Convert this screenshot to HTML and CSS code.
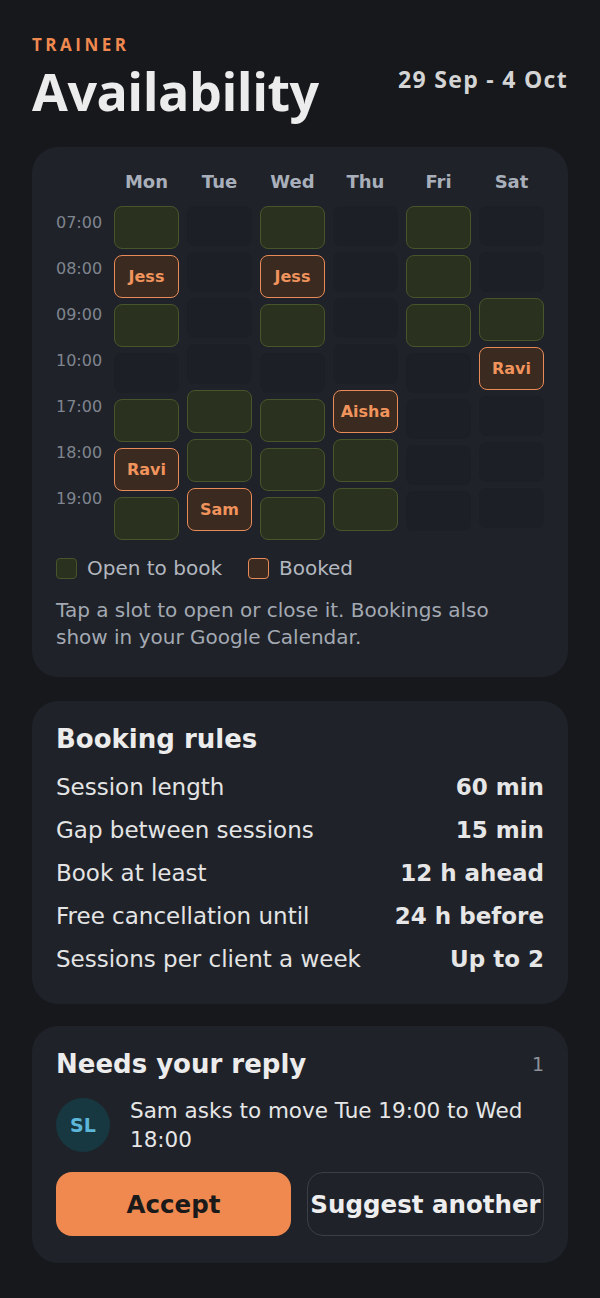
FILE: index.html
```html
<!DOCTYPE html>
<html lang="en">
<head>
<meta charset="utf-8">
<title>Availability</title>
<link rel="stylesheet" href="styles.css">
</head>
<body>
<div class="page">
  <header class="header">
    <div class="eyebrow">TRAINER</div>
    <div class="title-row">
      <h1 class="title">Availability</h1>
      <div class="date">29 Sep - 4 Oct</div>
    </div>
  </header>

  <section class="card card-sched">
    <div class="sched-head">
      <span></span>
      <span class="dayname">Mon</span>
      <span class="dayname">Tue</span>
      <span class="dayname">Wed</span>
      <span class="dayname">Thu</span>
      <span class="dayname">Fri</span>
      <span class="dayname">Sat</span>
    </div>
    <div class="sched-body">
      <div class="times">
        <div class="time">07:00</div>
        <div class="time">08:00</div>
        <div class="time">09:00</div>
        <div class="time">10:00</div>
        <div class="time">17:00</div>
        <div class="time">18:00</div>
        <div class="time">19:00</div>
      </div>
      <div class="day">
        <div class="slot open"></div>
        <div class="slot booked">Jess</div>
        <div class="slot open"></div>
        <div class="slot"></div>
        <div class="slot open"></div>
        <div class="slot booked">Ravi</div>
        <div class="slot open"></div>
      </div>
      <div class="day">
        <div class="slot"></div>
        <div class="slot"></div>
        <div class="slot"></div>
        <div class="slot"></div>
        <div class="slot open"></div>
        <div class="slot open"></div>
        <div class="slot booked">Sam</div>
      </div>
      <div class="day">
        <div class="slot open"></div>
        <div class="slot booked">Jess</div>
        <div class="slot open"></div>
        <div class="slot"></div>
        <div class="slot open"></div>
        <div class="slot open"></div>
        <div class="slot open"></div>
      </div>
      <div class="day">
        <div class="slot"></div>
        <div class="slot"></div>
        <div class="slot"></div>
        <div class="slot"></div>
        <div class="slot booked">Aisha</div>
        <div class="slot open"></div>
        <div class="slot open"></div>
      </div>
      <div class="day">
        <div class="slot open"></div>
        <div class="slot open"></div>
        <div class="slot open"></div>
        <div class="slot"></div>
        <div class="slot"></div>
        <div class="slot"></div>
        <div class="slot"></div>
      </div>
      <div class="day">
        <div class="slot"></div>
        <div class="slot"></div>
        <div class="slot open"></div>
        <div class="slot booked">Ravi</div>
        <div class="slot"></div>
        <div class="slot"></div>
        <div class="slot"></div>
      </div>
    </div>

    <div class="legend">
      <div class="legend-item"><span class="swatch swatch-open"></span>Open to book</div>
      <div class="legend-item"><span class="swatch swatch-booked"></span>Booked</div>
    </div>
    <p class="help">Tap a slot to open or close it. Bookings also show in your Google Calendar.</p>
  </section>

  <section class="card card-rules">
    <h2 class="card-title">Booking rules</h2>
    <div class="rule"><span>Session length</span><strong>60 min</strong></div>
    <div class="rule"><span>Gap between sessions</span><strong>15 min</strong></div>
    <div class="rule"><span>Book at least</span><strong>12 h ahead</strong></div>
    <div class="rule"><span>Free cancellation until</span><strong>24 h before</strong></div>
    <div class="rule"><span>Sessions per client a week</span><strong>Up to 2</strong></div>
  </section>

  <section class="card card-reply">
    <div class="card-head">
      <h2 class="card-title">Needs your reply</h2>
      <span class="count">1</span>
    </div>
    <div class="request">
      <div class="avatar">SL</div>
      <p class="request-text">Sam asks to move Tue 19:00 to Wed 18:00</p>
    </div>
    <div class="actions">
      <button class="btn btn-accept">Accept</button>
      <button class="btn btn-ghost">Suggest another</button>
    </div>
  </section>
</div>
</body>
</html>
```

FILE: styles.css
```css
* { box-sizing: border-box; }

html, body {
  margin: 0;
  background: #16181c;
}

body {
  font-family: "DejaVu Sans", Verdana, sans-serif;
  color: #e8e8e8;
}

.page {
  padding: 35px 32px 32px;
}

.header {
  margin-bottom: 27px;
}

.eyebrow {
  font-family: "Open Sans", "DejaVu Sans", sans-serif;
  font-weight: 700;
  font-size: 17px;
  line-height: 20px;
  letter-spacing: 3.5px;
  color: #f0894f;
}

.title-row {
  display: flex;
  justify-content: space-between;
  align-items: flex-start;
  margin-top: 7px;
}

.title {
  margin: 0;
  font-family: "Open Sans", "DejaVu Sans", sans-serif;
  font-weight: 700;
  font-size: 52px;
  line-height: 58px;
  letter-spacing: -0.5px;
  color: #ececec;
}

.date {
  margin-top: 2px;
  font-family: "Open Sans", "DejaVu Sans", sans-serif;
  font-weight: 700;
  font-size: 23px;
  line-height: 30px;
  letter-spacing: 1.3px;
  color: #d4d4d4;
}

.card {
  background: #1f2229;
  border-radius: 26px;
  padding: 24px;
  margin-bottom: 24px;
}

.card-sched {
  padding-bottom: 26px;
}

.card-rules {
  margin-bottom: 22px;
}

.card-reply {
  padding-bottom: 27px;
}

/* schedule */
.sched-head,
.sched-body {
  display: grid;
  grid-template-columns: 50px repeat(6, 1fr);
  column-gap: 8px;
}

.sched-head {
  margin-bottom: 14px;
}

.dayname {
  text-align: center;
  font-weight: 700;
  font-size: 18px;
  line-height: 21px;
  color: #a8afba;
}

.times,
.day {
  display: flex;
  flex-direction: column;
  gap: 6px;
}

.time {
  height: 40px;
  padding-top: 8px;
  font-size: 16px;
  line-height: 18px;
  color: #7f858f;
}

.slot {
  height: 40px;
  border-radius: 8px;
  background: #1c1f25;
}

.slot.open,
.slot.booked {
  height: 43px;
  border: 1.5px solid;
}

.slot.open {
  background: #2a321f;
  border-color: #47552a;
}

.slot.booked {
  background: #3a2a1f;
  border-color: #e98b58;
  color: #f0935c;
  font-weight: 700;
  font-size: 16px;
  display: flex;
  align-items: center;
  justify-content: center;
}

.legend {
  display: flex;
  gap: 26px;
  margin-top: 17px;
}

.legend-item {
  display: flex;
  align-items: center;
  gap: 10px;
  font-size: 20px;
  line-height: 22px;
  color: #b2b7bf;
}

.swatch {
  width: 21px;
  height: 21px;
  border-radius: 4px;
  border: 1.5px solid;
}

.swatch-open {
  background: #2a321f;
  border-color: #47552a;
}

.swatch-booked {
  background: #3a2a1f;
  border-color: #e98b58;
}

.help {
  margin: 18px 0 0;
  padding-right: 10px;
  font-size: 20px;
  line-height: 27px;
  color: #a3a9b2;
}

/* rules */
.card-title {
  margin: 0;
  font-size: 26px;
  line-height: 28px;
  font-weight: 700;
  color: #ececec;
}

.card > .card-title {
  margin-bottom: 12px;
}

.rule {
  display: flex;
  justify-content: space-between;
  align-items: center;
  height: 43px;
  font-size: 23px;
  color: #e4e4e4;
}

.rule strong {
  font-weight: 700;
  color: #e6e6e6;
}

/* reply */
.card-head {
  display: flex;
  justify-content: space-between;
  align-items: center;
}

.count {
  font-size: 19px;
  color: #8b9099;
}

.request {
  display: flex;
  align-items: center;
  gap: 20px;
  margin-top: 18px;
}

.avatar {
  flex: none;
  width: 54px;
  height: 54px;
  border-radius: 50%;
  background: #173840;
  color: #5bb6d8;
  font-weight: 700;
  font-size: 19px;
  display: flex;
  align-items: center;
  justify-content: center;
}

.request-text {
  margin: 0;
  font-size: 21.5px;
  line-height: 29px;
  color: #e6e6e6;
}

.actions {
  display: flex;
  gap: 16px;
  margin-top: 18px;
}

.btn {
  flex: 1 1 0;
  height: 64px;
  border-radius: 16px;
  font-family: "DejaVu Sans", Verdana, sans-serif;
  font-weight: 700;
  font-size: 24.5px;
  padding: 0;
  white-space: nowrap;
  cursor: pointer;
}

.btn-accept {
  background: #f0894f;
  border: none;
  color: #1a1a1a;
}

.btn-ghost {
  background: transparent;
  border: 1.5px solid #3a3e46;
  color: #eeeeee;
}
```
